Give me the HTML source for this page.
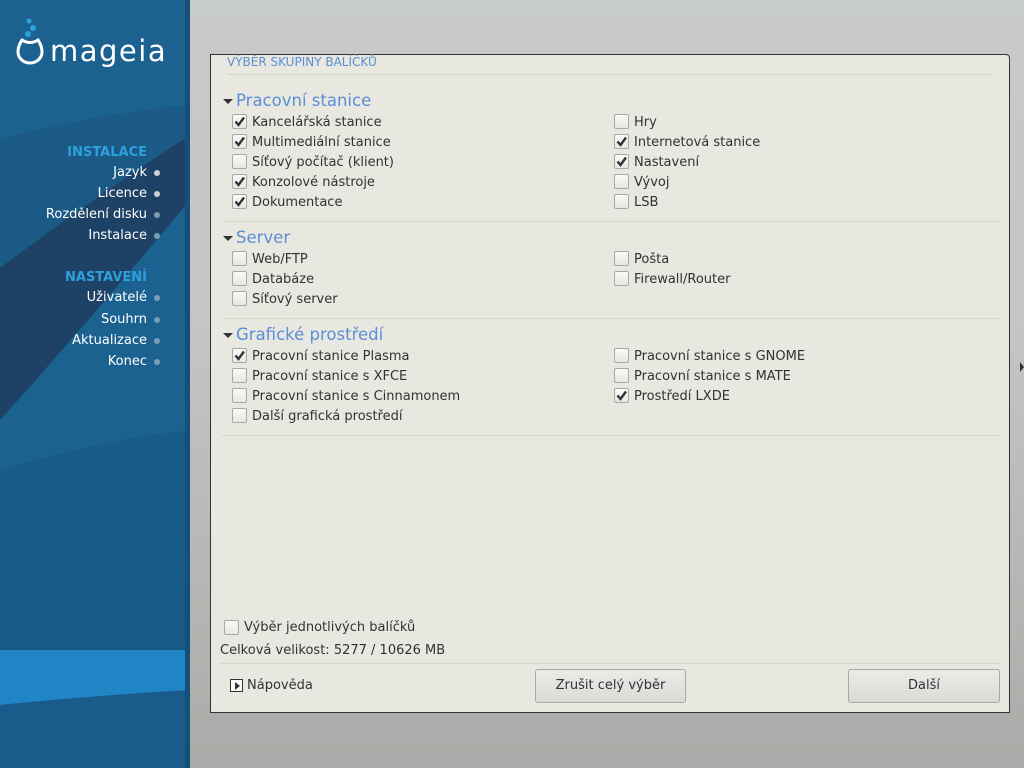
<!DOCTYPE html>
<html><head><meta charset="utf-8"><style>
*{margin:0;padding:0;box-sizing:border-box}
body{width:1024px;height:768px;overflow:hidden;position:relative;font-family:"DejaVu Sans","Liberation Sans",sans-serif;font-size:13px;color:#2e3436;background:linear-gradient(#c7ccc8 0,#c7ccc8 15px,#c8c8c8 16px,#c6c6c6 300px,#b4b6b3 600px,#a8aba7 768px)}
#side{position:absolute;left:0;top:0;width:190px;height:768px;background:#1c6291;overflow:hidden}
#side .edge{position:absolute;right:0;top:0;width:5px;height:768px;background:#16507a}
.nav{position:absolute;right:43px;color:#fff;text-align:right;font-size:13px}
.nav.h{color:#2ea0dc;font-weight:bold}
.dot{position:absolute;left:154px;width:6px;height:6px;border-radius:50%;background:#d0d0d0}
.dot.d{background:#7a9cb6}
#dlg{position:absolute;left:210px;top:54px;width:800px;height:659px;background:#e8e7e0;border:1px solid #2e3436;border-radius:0 4px 0 0}
.abs{position:absolute;white-space:nowrap}
.sep{position:absolute;height:1px;background:#d5d4cd}
.hd{font-size:16.5px;color:#5b8fd6}
.tri{position:absolute;width:0;height:0;border-left:5px solid transparent;border-right:5px solid transparent;border-top:5px solid #2e3436}
.cb{position:absolute;width:15px;height:15px;border:1px solid #a8a8a4;border-radius:2px;background:linear-gradient(#fafaf8,#e6e6e2)}
.cb svg{position:absolute;left:0;top:0}
.btn{position:absolute;height:34px;border:1px solid #a8a8a4;border-radius:3px;background:linear-gradient(#ebebe8,#dadad6);text-align:center;line-height:32px}
</style></head><body>
<div id="side">
<svg class="abs" style="left:0;top:0" width="190" height="768">
<path d="M0 140 Q90 115 190 105 L190 200 Q90 320 0 420 Z" fill="#1e4266"/>
<path d="M0 140 Q90 115 190 105 L190 135 Q90 200 0 268 Z" fill="#1c5a86"/>
<path d="M0 470 Q100 440 190 430 L190 768 L0 768Z" fill="#1a5a88"/>
<path d="M0 650 L190 650 L190 690 Q100 695 0 705Z" fill="#1f85c4"/>
<path d="M0 705 Q100 695 190 690 L190 768 L0 768Z" fill="#1a5b8c"/>
<circle cx="29" cy="21" r="2.5" fill="#2e9fe0"/><circle cx="33" cy="28" r="3" fill="#2e9fe0"/><circle cx="28" cy="34" r="3" fill="#2e9fe0"/>
<path d="M22 40 Q18 46 18 52 A12 11 0 0 0 42 52 Q42 46 38 40 Q30 45 22 40Z" fill="none" stroke="#fff" stroke-width="3"/>
<text x="50" y="61" fill="#fff" font-size="29" font-family="DejaVu Sans" letter-spacing="1.5">mageia</text>
</svg>
<div class="edge"></div>
<div class="nav h" style="top:145px">INSTALACE</div>
<div class="nav" style="top:165px">Jazyk</div><div class="dot" style="top:170px"></div>
<div class="nav" style="top:186px">Licence</div><div class="dot" style="top:191px"></div>
<div class="nav" style="top:207px">Rozdělení disku</div><div class="dot d" style="top:212px"></div>
<div class="nav" style="top:228px">Instalace</div><div class="dot d" style="top:233px"></div>
<div class="nav h" style="top:270px">NASTAVENÍ</div>
<div class="nav" style="top:290px">Uživatelé</div><div class="dot d" style="top:295px"></div>
<div class="nav" style="top:312px">Souhrn</div><div class="dot d" style="top:317px"></div>
<div class="nav" style="top:333px">Aktualizace</div><div class="dot d" style="top:338px"></div>
<div class="nav" style="top:354px">Konec</div><div class="dot d" style="top:359px"></div>
</div>
<div class="abs" style="left:1020px;top:362px;width:0;height:0;border-top:5px solid transparent;border-bottom:5px solid transparent;border-left:4px solid #2e3436"></div>
<div id="dlg"></div>
<div class="abs" style="left:227px;top:55px;font-size:12px;color:#5b8fd6">VÝBĚR SKUPINY BALÍČKŮ</div>
<div class="sep" style="left:227px;top:74px;width:766px"></div>
<div id="items"></div>
<div class="sep" style="left:222px;top:221px;width:778px"></div>
<div class="sep" style="left:222px;top:318px;width:778px"></div>
<div class="sep" style="left:222px;top:435px;width:778px"></div>
<div class="cb" style="left:224px;top:620px"></div>
<div class="abs" style="left:244px;top:620px">Výběr jednotlivých balíčků</div>
<div class="abs" style="left:220px;top:643px">Celková velikost: 5277 / 10626 MB</div>
<div class="sep" style="left:220px;top:663px;width:780px"></div>
<div class="abs" style="left:230px;top:679px;width:13px;height:13px;border:1px solid #2e3436;background:#fafaf8"></div>
<div class="abs" style="left:235px;top:682px;width:0;height:0;border-top:4px solid transparent;border-bottom:4px solid transparent;border-left:5px solid #2e3436"></div>
<div class="abs" style="left:247px;top:678px">Nápověda</div>
<div class="btn" style="left:535px;top:669px;width:151px">Zrušit celý výběr</div>
<div class="btn" style="left:848px;top:669px;width:152px">Další</div>
<script>
var ck='<svg width="13" height="13"><path d="M2.5 6.5 L5.5 10 L11 2.5" fill="none" stroke="#2e3436" stroke-width="2.4"/></svg>';
var h='';
function hd(t,y){h+='<div class="tri" style="left:223px;top:'+(y+5)+'px"></div><div class="abs hd" style="left:236px;top:'+(y-3)+'px">'+t+'</div>';}
function it(x,y,t,c){h+='<div class="cb" style="left:'+x+'px;top:'+(y-8)+'px">'+(c?ck:'')+'</div><div class="abs" style="left:'+(x+20)+'px;top:'+(y-7)+'px">'+t+'</div>';}
hd('Pracovní stanice',94);
[['Kancelářská stanice',1,'Hry',0],['Multimediální stanice',1,'Internetová stanice',1],['Síťový počítač (klient)',0,'Nastavení',1],['Konzolové nástroje',1,'Vývoj',0],['Dokumentace',1,'LSB',0]].forEach(function(r,i){it(232,122+i*20,r[0],r[1]);it(614,122+i*20,r[2],r[3]);});
hd('Server',231);
it(232,259,'Web/FTP',0);it(614,259,'Pošta',0);it(232,279,'Databáze',0);it(614,279,'Firewall/Router',0);it(232,299,'Síťový server',0);
hd('Grafické prostředí',328);
it(232,356,'Pracovní stanice Plasma',1);it(614,356,'Pracovní stanice s GNOME',0);
it(232,376,'Pracovní stanice s XFCE',0);it(614,376,'Pracovní stanice s MATE',0);
it(232,396,'Pracovní stanice s Cinnamonem',0);it(614,396,'Prostředí LXDE',1);
it(232,416,'Další grafická prostředí',0);
document.getElementById('items').innerHTML=h;
</script>
</body></html>
